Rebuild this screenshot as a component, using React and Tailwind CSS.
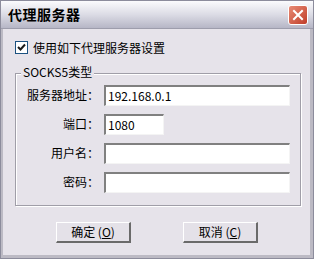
import React from "react";

const font = { fontFamily: '"Noto Sans CJK SC", "Noto Sans", sans-serif' };

const Field = ({ label, value, narrow }) => (
  <div className="flex items-center h-[20px]">
    <div className="w-[88px] text-right text-[12px] leading-none text-black pr-[5px]">{label}</div>
    <div
      className={`h-[21px] bg-white border-t-2 border-l-2 border-t-[#808080] border-l-[#808080] border-b border-r border-b-[#f4f4f4] border-r-[#f4f4f4] flex items-center pl-[2px] text-[12px] text-black ${
        narrow ? "w-[60px]" : "w-[186px]"
      }`}
    >
      {value}
    </div>
  </div>
);

const Button = ({ children }) => (
  <button className="w-[75px] h-[21px] bg-[#e4e1e8] border-t border-l border-t-white border-l-white border-b-2 border-r-2 border-b-[#6a6a6a] border-r-[#6a6a6a] text-[12px] leading-none text-black flex items-center justify-center">
    {children}
  </button>
);

export default function App() {
  return (
    <div style={font} className="w-[314px] h-[259px] bg-[#e6e3ea] border border-[#8c8c9c] flex flex-col">
      {/* title bar */}
      <div className="h-[28px] flex items-center justify-between pl-[7px] pr-[5px] bg-gradient-to-b from-[#fbfbfd] via-[#dcdce5] to-[#b6b6c6] border-b border-[#9d9dac]">
        <span className="text-[14px] font-bold text-black tracking-[0.5px]">代理服务器</span>
        <div className="w-[20px] h-[20px] rounded-[3px] border border-white bg-gradient-to-br from-[#e88a74] to-[#bf3b28] flex items-center justify-center">
          <svg width="12" height="12" viewBox="0 0 12 12">
            <path d="M2 2 L10 10 M10 2 L2 10" stroke="white" strokeWidth="2" strokeLinecap="square" />
          </svg>
        </div>
      </div>

      {/* body */}
      <div className="flex-1 border-l-2 border-r-[3px] border-b-[3px] border-[#bcbac4] flex flex-col pl-[12px] pr-[8px]">
        <label className="flex items-center mt-[12px] h-[13px]">
          <span className="w-[13px] h-[13px] bg-white border border-[#1c5180] flex items-center justify-center">
            <svg width="9" height="9" viewBox="0 0 9 9">
              <path d="M1 4 L3.5 6.5 L8 1.5" stroke="#1a1a1a" strokeWidth="2" fill="none" />
            </svg>
          </span>
          <span className="ml-[5px] text-[12px] leading-none text-black">使用如下代理服务器设置</span>
        </label>

        {/* group box */}
        <div className="relative mt-[19px] w-[286px] h-[133px] border border-[#a09ea8] shadow-[inset_1px_1px_0_#ffffff,1px_1px_0_#ffffff] pt-[11px] flex flex-col gap-[9px]">
          <span className="absolute -top-[8px] left-[5px] px-[2px] bg-[#e6e3ea] text-[12px] leading-none text-black">SOCKS5类型</span>
          <Field label="服务器地址：" value="192.168.0.1" />
          <Field label="端口：" value="1080" narrow />
          <Field label="用户名：" value="" />
          <Field label="密码：" value="" />
        </div>

        <div className="flex mt-[16px] pl-[41px] gap-[52px]">
          <Button>
            确定 (<span className="underline">O</span>)
          </Button>
          <Button>
            取消 (<span className="underline">C</span>)
          </Button>
        </div>
      </div>
    </div>
  );
}
